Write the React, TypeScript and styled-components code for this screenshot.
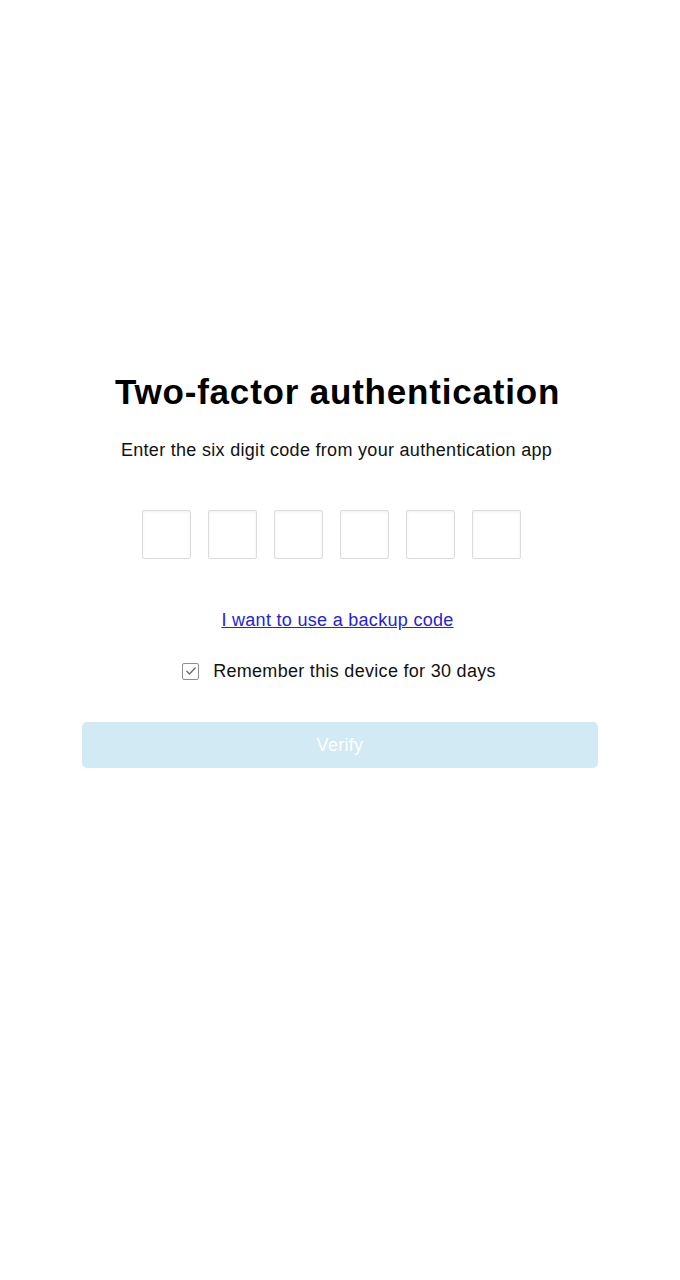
import React, { useState } from 'react'
import styled, { createGlobalStyle } from 'styled-components'

const GlobalStyle = createGlobalStyle`
  html, body {
    margin: 0;
    padding: 0;
    background: #ffffff;
    font-family: "Liberation Sans", Arial, sans-serif;
  }
`

const Page = styled.div`
  width: 100%;
  min-height: 1280px;
  box-sizing: border-box;
  padding-top: 372px;
  display: flex;
  justify-content: center;
`
const Card = styled.div`
  width: 516px;
  display: flex;
  flex-direction: column;
  align-items: center;
`
const Title = styled.h1`
  margin: 0;
  padding-right: 5px;
  font-size: 35px;
  letter-spacing: 0.8px;
  font-weight: 700;
  color: #000;
  line-height: 40px;
`
const Subtitle = styled.p`
  margin: 27px 0 0;
  padding-right: 7px;
  font-size: 18px;
  letter-spacing: 0.3px;
  color: #111;
  line-height: 22px;
`
const Digits = styled.div`
  display: flex;
  margin-top: 49px;
`
const DigitInput = styled.input`
  box-sizing: border-box;
  width: 49px;
  height: 49px;
  margin-right: 17px;
  border: 1px solid #dcdcdc;
  border-radius: 2px;
  box-shadow: inset 0 1px 3px rgba(0, 0, 0, 0.06);
  text-align: center;
  font-size: 22px;
  font-family: inherit;
  outline: none;
`
const BackupLink = styled.a`
  margin-top: 50px;
  margin-right: 5px;
  font-size: 18px;
  letter-spacing: 0.3px;
  color: #2424d4;
  text-decoration: underline;
  line-height: 22px;
`
const RememberRow = styled.label`
  display: flex;
  align-items: center;
  gap: 14px;
  margin-top: 29px;
  margin-right: 2px;
  font-size: 18px;
  letter-spacing: 0.3px;
  color: #111;
  line-height: 22px;
  cursor: pointer;
`
const Box = styled.span`
  box-sizing: border-box;
  width: 17px;
  height: 17px;
  border: 1px solid #8f8f8f;
  border-radius: 2px;
  display: flex;
  align-items: center;
  justify-content: center;
  background: #fff;
`
const VerifyButton = styled.button`
  margin-top: 40px;
  width: 516px;
  height: 46px;
  border: none;
  border-radius: 5px;
  background: #d2eaf3;
  color: #ffffff;
  font-family: inherit;
  font-size: 18px;
  letter-spacing: 0.3px;
`

const App = (): JSX.Element => {
  const [remember, setRemember] = useState(true)

  return (
    <Page>
      <GlobalStyle />
      <Card>
        <Title>Two-factor authentication</Title>
        <Subtitle>Enter the six digit code from your authentication app</Subtitle>
        <Digits>
          {[0, 1, 2, 3, 4, 5].map((i) => (
            <DigitInput key={i} maxLength={1} inputMode="numeric" />
          ))}
        </Digits>
        <BackupLink href="#">I want to use a backup code</BackupLink>
        <RememberRow onClick={() => setRemember(!remember)}>
          <Box>
            {remember && (
              <svg width="12" height="10" viewBox="0 0 12 10">
                <path d="M1.5 5 L4.5 8 L10.5 1.5" fill="none" stroke="#6b6b6b" strokeWidth="1.3" />
              </svg>
            )}
          </Box>
          Remember this device for 30 days
        </RememberRow>
        <VerifyButton disabled>Verify</VerifyButton>
      </Card>
    </Page>
  )
}

export default App
